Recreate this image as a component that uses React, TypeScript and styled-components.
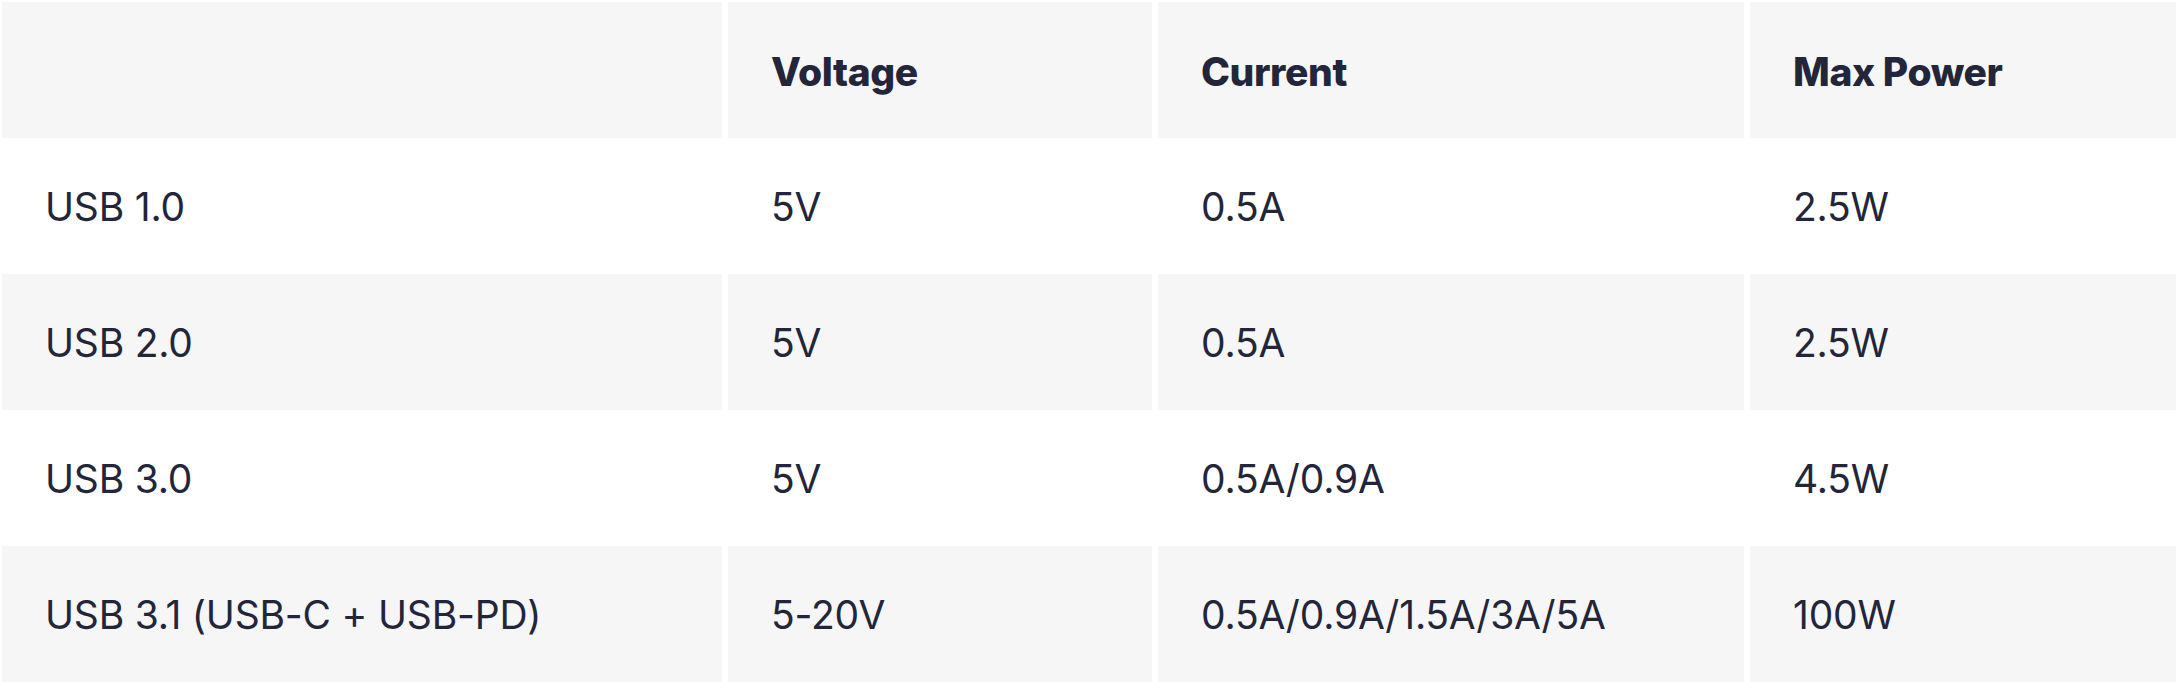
import { type JSX } from 'react';

import styled, { createGlobalStyle } from 'styled-components';

type PowerRow = {
  readonly current: string;
  readonly name: string;
  readonly power: string;
  readonly voltage: string;
};

const HEADINGS = ['', 'Voltage', 'Current', 'Max Power'];

const ROWS: PowerRow[] = [
  { name: 'USB 1.0', voltage: '5V', current: '0.5A', power: '2.5W' },
  { name: 'USB 2.0', voltage: '5V', current: '0.5A', power: '2.5W' },
  { name: 'USB 3.0', voltage: '5V', current: '0.5A/0.9A', power: '4.5W' },
  {
    name: 'USB 3.1 (USB-C + USB-PD)',
    voltage: '5-20V',
    current: '0.5A/0.9A/1.5A/3A/5A',
    power: '100W',
  },
];

const GlobalStyle = createGlobalStyle`
  html,
  body {
    margin: 0;
    padding: 0;
    background: #ffffff;
  }
  body {
    font-family: Inter, 'Noto Sans', sans-serif;
    color: #23263b;
    -webkit-font-smoothing: antialiased;
  }
`;

const App = (): JSX.Element => (
  <>
    <GlobalStyle />
    <StyledTable role="table">
      {HEADINGS.map((heading, index) => (
        <StyledHead
          key={`head-${index}`}
          role="columnheader"
        >
          {heading}
        </StyledHead>
      ))}
      {ROWS.map((row, rowIndex) => {
        const isStriped = rowIndex % 2 === 1;
        return [row.name, row.voltage, row.current, row.power].map(
          (value, colIndex) => (
            <StyledCell
              key={`${row.name}-${colIndex}`}
              role="cell"
              $striped={isStriped}
            >
              {value}
            </StyledCell>
          ),
        );
      })}
    </StyledTable>
  </>
);

App.displayName = 'App';

export default App;

const StyledTable = styled.div`
  display: grid;
  grid-template-columns: 720px 424px 586px 1fr;
  grid-auto-rows: 136px;
  column-gap: 6px;
  padding: 2px 0 0 2px;
  width: 100%;
  box-sizing: border-box;
`;

const StyledBaseCell = styled.div`
  display: flex;
  align-items: center;
  padding: 0 43px;
  line-height: 1.2;
  white-space: nowrap;
`;

const StyledHead = styled(StyledBaseCell)`
  background: #f6f6f6;
  font-size: 39px;
  font-weight: 800;
  letter-spacing: -0.4px;
  padding-top: 4px;
`;

const StyledCell = styled(StyledBaseCell)<{ $striped: boolean }>`
  background: ${({ $striped }) => ($striped ? '#f6f6f6' : '#ffffff')};
  font-size: 39px;
  font-weight: 400;
  letter-spacing: -0.2px;
  padding-top: 2px;
`;
